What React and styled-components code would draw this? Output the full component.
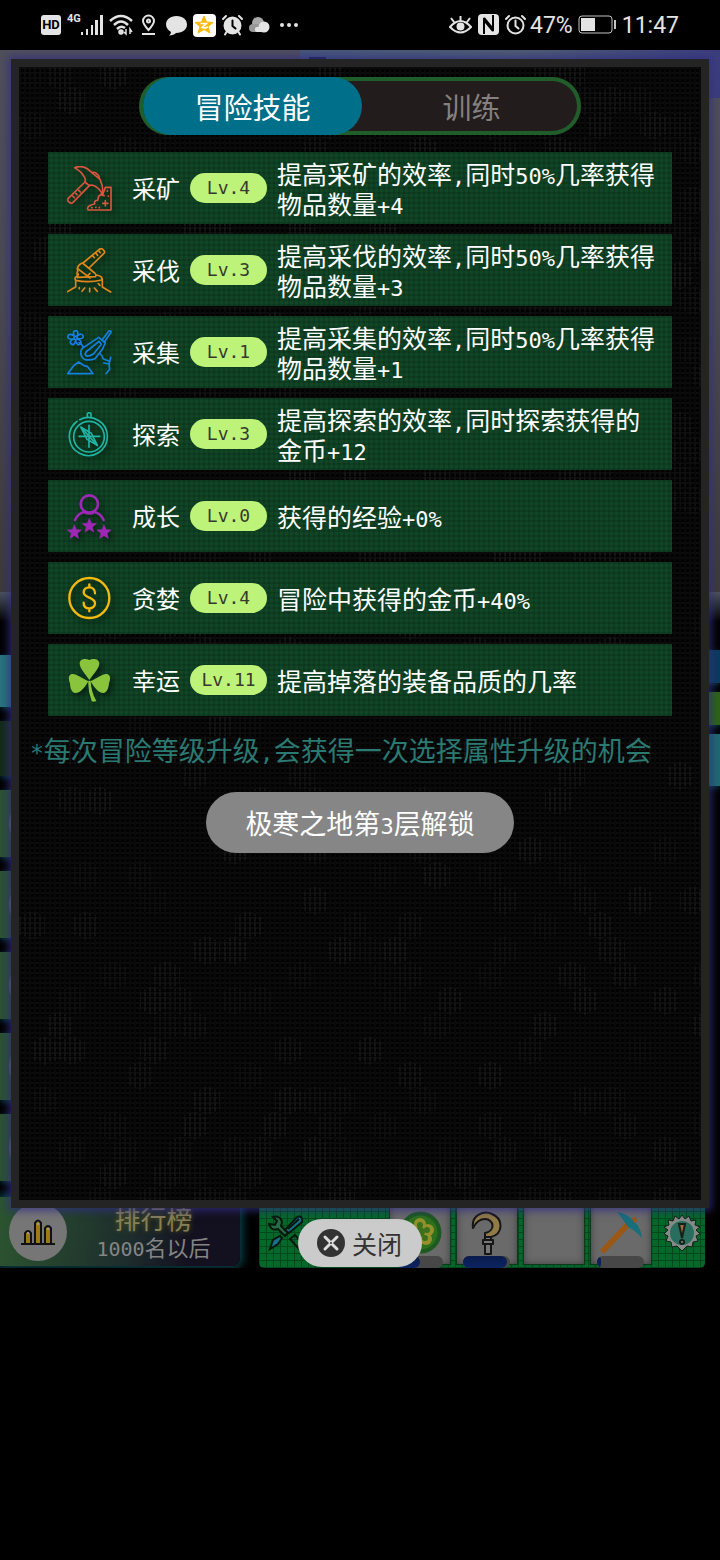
import React, { useState } from "react";
import styled, { createGlobalStyle, css } from "styled-components";

const GlobalStyle = createGlobalStyle`
  * {
    box-sizing: border-box;
  }

  body {
    margin: 0;
    background: #000;
    font-family: "Noto Sans CJK SC", sans-serif;
  }

  button {
    margin: 0;
    padding: 0;
    border: 0;
    background: none;
    font-family: inherit;
    cursor: pointer;
  }

  svg {
    display: block;
    flex: none;
  }
`;

// fine mesh over the skill rows
const mesh = css`
  background-image:
    repeating-linear-gradient(to right, rgba(0, 0, 0, 0.12) 0 2px, transparent 2px 5px),
    repeating-linear-gradient(to bottom, rgba(0, 0, 0, 0.12) 0 2px, transparent 2px 5px);
`;

// Status bar
const StatusBar = styled.header`
  display: flex;
  align-items: center;
  justify-content: space-between;
  height: 50px;
  padding: 0 41px;
  background: #000;
  color: #e4e4e4;
  font-family: Roboto, sans-serif;
  font-size: 23px;
`;

const StatusGroup = styled.div`
  display: flex;
  align-items: center;
  gap: ${(p) => p.$gap};
`;

const HdBadge = styled.span`
  width: 20px;
  height: 20px;
  border-radius: 3px;
  background: #e4e4e4;
  color: #000;
  font-size: 13px;
  font-weight: 700;
  line-height: 20px;
  text-align: center;
`;

const Signal = styled.span`
  display: flex;
  align-items: flex-start;
  font-size: 11px;
  font-weight: 700;
  line-height: 10px;
`;

const QStar = styled.span`
  display: flex;
  align-items: center;
  justify-content: center;
  width: 23px;
  height: 23px;
  border-radius: 4px;
  background: #fff;
`;

// Game screen behind the dialog
const Stage = styled.main`
  display: grid;
  min-height: calc(100vh - 342px);
  overflow: hidden;
`;

const Scene = styled.div`
  grid-area: 1 / 1;
  display: flex;
  flex-direction: column;
`;

const Sky = styled.div`
  height: 542px;
  background: linear-gradient(#50505a, #4a4a50 45%, #3c3a39);
`;

const SkyHeader = styled.div`
  height: 48px;
  margin-left: 300px;
  padding: 7px 9px;
  background: linear-gradient(100deg, #46587a, #4f5f72 50%, #3b3d7c);
`;

const SkyMark = styled.div`
  width: 17px;
  height: 6px;
  border: 3px solid #1b2050;
`;

const SceneBody = styled.div`
  flex: 1;
  display: flex;
  justify-content: space-between;
  background: linear-gradient(#4b545c, #000 30px);
`;

const SideList = styled.div`
  display: flex;
  flex-direction: column;
  gap: ${(p) => p.$gap};
  width: 40%;
  padding-top: ${(p) => p.$top};
`;

const SideItem = styled.div`
  height: ${(p) => p.$height};
  padding: 5px 9px;
  background: ${(p) => p.$color};
  box-shadow: 0 2px 6px #0b3a44;
`;

const SideDot = styled.div`
  width: 57px;
  height: 57px;
  border-radius: 50%;
  background: #5d6a5d;
`;

const Dock = styled.div`
  display: flex;
  align-items: flex-start;
  justify-content: space-between;
  padding-right: 15px;
`;

const RankCard = styled.button`
  display: flex;
  align-items: center;
  width: 240px;
  height: 69px;
  padding-left: 9px;
  border-radius: 0 0 8px 0;
  background: linear-gradient(100deg, #2c5530, #1d2c2c 55%, #13101f 80%);
  box-shadow: 0 0 8px 3px #0a4048;
`;

const RankAvatar = styled.span`
  display: flex;
  align-items: center;
  justify-content: center;
  width: 58px;
  height: 58px;
  border-radius: 50%;
  background: #767676;
`;

const RankText = styled.span`
  flex: 1;
  display: flex;
  flex-direction: column;
  align-items: center;
  color: #858585;
  font-size: 22px;
  line-height: 28px;
`;

const RankTitle = styled.span`
  color: #85805a;
  font-size: 26px;
  text-shadow: 0 0 5px #5c5a16;
`;

const Toolbar = styled.div`
  display: flex;
  width: 446px;
  height: 71px;
  padding: 0 5px 0 9px;
  border-radius: 5px;
  background-color: #04682a;
  background-image:
    repeating-linear-gradient(to right, #03471d 0 1px, transparent 1px 7px),
    repeating-linear-gradient(to bottom, #03471d 0 1px, transparent 1px 7px);
`;

const ToolButton = styled.button`
  display: flex;
  align-items: center;
`;

const Slots = styled.div`
  display: flex;
  gap: 7px;
  margin: 0 13px 0 auto;
`;

const Slot = styled.button`
  position: relative;
  display: flex;
  justify-content: center;
  width: 60px;
  height: 67px;
  padding-top: 14px;
  background: #6a6a6a;
  box-shadow: inset 0 0 7px #3c3c3c, 0 0 1px 1px #0a3a1c;
`;

const Meter = styled.span`
  position: absolute;
  left: 6px;
  bottom: -4px;
  width: 47px;
  height: 12px;
  border-radius: 6px;
  overflow: hidden;
  background: #474747;
`;

const MeterFill = styled.span`
  display: block;
  height: 100%;
  border-radius: 0 6px 6px 0;
  background: linear-gradient(#0a1c4c, #0b2462);
`;

// Dialog
const Overlay = styled.div`
  grid-area: 1 / 1;
  z-index: 1;
  display: flex;
  flex-direction: column;
  align-items: center;
  gap: 11px;
  padding: 9px 11px 1px;
`;

const Panel = styled.section`
  position: relative;
  flex: 1;
  display: flex;
  flex-direction: column;
  align-items: center;
  width: 100%;
  padding-top: 10px;
  border: 8px solid #242424;
  background: #020202;
  box-shadow: 0 0 8px 3px rgba(50, 45, 130, 0.75);
  color: #fff;
`;

const Backdrop = styled.svg`
  position: absolute;
  inset: 0;
  width: 100%;
  height: 100%;
`;

const Tabs = styled.div`
  position: relative;
  display: grid;
  grid-template-columns: 1fr 1fr;
  width: 442px;
  max-width: 100%;
  height: 58px;
  padding-left: 4px;
  border-radius: 29px;
  background: #231c1c;
  box-shadow: inset 0 0 0 4px #1f5e2b;
`;

const Tab = styled.button`
  border-radius: 29px;
  background: ${(p) => (p.$active ? "#00708a" : "transparent")};
  color: ${(p) => (p.$active ? "#fff" : "#858080")};
  font-size: 29px;
  line-height: 54px;
`;

const SkillList = styled.ul`
  position: relative;
  align-self: stretch;
  display: flex;
  flex-direction: column;
  gap: 10px;
  margin: 17px 29px 0;
  padding: 0;
  list-style: none;
`;

const SkillRow = styled.li`
  display: flex;
  align-items: center;
  gap: 10px;
  min-height: 72px;
  padding: 0 10px 0 19px;
  background-color: #104526;
  ${mesh}

  svg {
    margin-right: 10px;
    filter: drop-shadow(3px 3px 3px rgba(0, 0, 0, 0.5));
  }
`;

const SkillName = styled.span`
  flex: none;
  font-size: 24px;
  line-height: 30px;
`;

const Level = styled.span`
  flex: none;
  width: 77px;
  height: 30px;
  border-radius: 15px;
  background: #bdf378;
  color: #363a2c;
  font-family: "DejaVu Sans Mono", monospace;
  font-size: 18px;
  line-height: 30px;
  text-align: center;
`;

const SkillText = styled.span`
  flex: 1;
  font-size: 25px;
  line-height: 30px;
`;

// short line height, so that the runs never stretch the line they sit in
const Latin = styled.span`
  font-family: "DejaVu Sans Mono", monospace;
  font-size: ${(p) => p.$size};
  line-height: 16px;
`;

const Note = styled.p`
  position: relative;
  align-self: stretch;
  margin: 16px 11px 0;
  color: #2b7a72;
  font-size: 27px;
  line-height: 36px;
`;

const UnlockButton = styled.button`
  position: relative;
  height: 61px;
  margin-top: 24px;
  padding: 0 39px;
  border-radius: 31px;
  background: #868686;
  color: #fff;
  font-size: 27px;
  line-height: 56px;
`;

const CloseButton = styled.button`
  display: flex;
  align-items: center;
  gap: 7px;
  height: 48px;
  padding: 0 20px 0 19px;
  border-radius: 24px;
  background: #cbcbcb;
  color: #333;
  font-size: 25px;
  line-height: 44px;
`;

// Latin runs use a slightly smaller monospace face than the Chinese text
const Mixed = ({ text, size = "22px" }) =>
  text
    .split(/([\x20-\x7e]+)/)
    .filter(Boolean)
    .map((part, i) =>
      /^[\x20-\x7e]/.test(part) ? (
        <Latin key={i} $size={size}>
          {part}
        </Latin>
      ) : (
        part
      )
    );

const SkillSvg = ({ color, children, width = 5 }) => (
  <svg width="45" height="45" viewBox="0 0 135 135" fill="none" stroke={color} strokeWidth={width} strokeLinecap="round" strokeLinejoin="round">
    {children}
  </svg>
);

const MineIcon = () => (
  <SkillSvg color="#d9553f">
    <path d="M23 5C36 0 50 1 62 9L99 40C106 55 109 70 107 86C99 70 87 60 75 57L66 58L54 48L55 39C49 24 38 13 23 5Z" />
    <path d="M54 48L3 98Q0 102 4 106L10 111Q14 113 18 109L67 59" />
    <path d="M76 21C80 15 96 24 97 36M17 90l5 5M26 82l4 4M35 73l5 5" />
    <path d="M115 64H132V132H63C60 126 63 119 71 118C75 113 82 116 83 113C81 107 86 102 92 103L95 91L103 84L106 88L115 64Z" />
    <path d="M115 104v16M107 112h16M121 74v2M111 88v1M124 90v1M97 124v1M74 125h1M86 124h1" />
  </SkillSvg>
);

const ChopIcon = () => (
  <SkillSvg color="#e0871b">
    <path d="M48 45L97 4Q101 0 106 3L111 8Q115 13 110 17L66 60" />
    <path d="M86 15l6 7M95 8l5 6M77 23l5 6" />
    <path d="M44 46Q34 50 31 61Q34 67 30 76L32 88L85 86Q90 83 83 75L50 48Q47 44 44 46Z" />
    <path d="M32 62L69 90M59 86L69 76M31 88L34 78" />
    <path d="M29 86Q21 88 26 97Q65 105 104 96Q109 85 89 81" />
    <path d="M26 97V117Q16 122 2 131M106 93V117Q116 123 131 132" />
    <path d="M53 120L45 130M68 121V131M82 120L91 130M94 107l5 5M37 119v3" />
  </SkillSvg>
);

const GatherIcon = () => (
  <SkillSvg color="#1680e0">
    <circle cx="26" cy="24" r="5" />
    <path d="M22 18C16 6 22 2 26 2C31 2 36 7 30 18C40 10 46 12 48 17C50 23 46 28 32 26C43 32 44 38 39 42C34 46 28 44 26 31C24 44 18 46 13 42C8 38 8 32 20 27C6 29 1 25 3 18C5 11 14 12 22 18Z" />
    <path d="M36 38Q45 42 50 52" />
    <path d="M105 30L124 5Q128 0 131 3Q134 7 129 11L112 36" />
    <path d="M95 22L115 39L106 58L84 86Q68 92 52 88Q38 78 42 62Q44 53 58 47L95 22Z" />
    <path d="M96 34L103 43L80 71Q65 80 58 78Q52 73 57 66L96 34Z" />
    <path d="M2 131L20 107L35 96L51 107L62 110L78 131Z" />
    <path d="M98 70Q107 76 108 86L127 94M131 82L126 103L128 118L117 131M127 102L110 99" />
  </SkillSvg>
);

const ExploreIcon = () => (
  <SkillSvg color="#1fb5a4">
    <path d="M30 28A57 57 0 1 0 38 23" />
    <circle cx="66" cy="74" r="46" />
    <path d="M61 14V5Q67 -1 72 5V14M20 38L23 34" />
    <path d="M66 40V106M36 73H98" />
    <path d="M42 46L73 64L91 100L60 82Z" />
    <path d="M42 46L91 100" />
  </SkillSvg>
);

const STAR = "M0 -21L6 -7L21 -6L9 4L13 19L0 11L-13 19L-9 4L-21 -6L-6 -7Z";

const GrowIcon = () => (
  <SkillSvg color="#9e27b5" width={8}>
    <circle cx="67" cy="30" r="26" />
    <path d="M24 78Q34 57 52 54Q67 62 82 54Q100 57 110 78" />
    <g fill="#9e27b5" strokeWidth="2">
      <path d={STAR} transform="translate(67 95)" />
      <path d={STAR} transform="translate(22 114)" />
      <path d={STAR} transform="translate(111 114)" />
    </g>
  </SkillSvg>
);

const GreedIcon = () => (
  <SkillSvg color="#f2b90f" width={7}>
    <circle cx="67" cy="66" r="60" />
    <path d="M84 52C84 40 76 34 67 34C57 34 50 40 50 49C50 68 84 62 84 82C84 92 76 97 67 97C57 97 50 91 50 80M67 25V34M67 97V106" />
  </SkillSvg>
);

const LuckIcon = () => (
  <SkillSvg color="none">
    <g fill="#89c43c">
      <path d="M67 66C55 48 38 32 38 16C38 3 55 0 67 6C79 0 96 3 97 16C97 32 79 48 67 66Z" />
      <path d="M64 69C46 63 25 44 12 49C3 53 5 66 9 76C9 90 14 105 25 105C41 105 56 86 64 69Z" />
      <path d="M71 69C89 63 110 44 122 49C132 53 130 66 126 76C125 90 120 105 109 105C94 105 79 86 71 69Z" />
      <path d="M64 68H71Q72 101 88 129Q78 134 74 129Q62 98 64 68Z" />
    </g>
  </SkillSvg>
);

const AlarmIcon = ({ solid }) => (
  <svg width="21" height="22" viewBox="0 0 21 22" fill="none" stroke="#e4e4e4" strokeWidth="2" strokeLinecap="round">
    <circle cx="10.5" cy="11.5" r="8" fill={solid ? "#e4e4e4" : "none"} />
    <path d="M1 5L4 2M20 5L17 2" />
    {solid && <path d="M4.500 18L3 20.500M16.500 18L18 20.500" />}
    <path d="M10.500 6.500V12L13.500 14.500" stroke={solid ? "#000" : "#e4e4e4"} />
  </svg>
);

const skills = [
  { name: "采矿", level: 4, icon: MineIcon, text: "提高采矿的效率,同时50%几率获得物品数量+4" },
  { name: "采伐", level: 3, icon: ChopIcon, text: "提高采伐的效率,同时50%几率获得物品数量+3" },
  { name: "采集", level: 1, icon: GatherIcon, text: "提高采集的效率,同时50%几率获得物品数量+1" },
  { name: "探索", level: 3, icon: ExploreIcon, text: "提高探索的效率,同时探索获得的金币+12" },
  { name: "成长", level: 0, icon: GrowIcon, text: "获得的经验+0%" },
  { name: "贪婪", level: 4, icon: GreedIcon, text: "冒险中获得的金币+40%" },
  { name: "幸运", level: 11, icon: LuckIcon, text: "提高掉落的装备品质的几率" },
];

// scattered hexagons, faintly lit through the mesh
const hexes = [];
for (let row = 0; row < 46; row++) {
  for (let col = 0; col < 26; col++) {
    const seed = Math.abs(Math.sin(row * 12.9898 + col * 78.233) * 43758.5453) % 1;
    if (seed < 0.27) {
      hexes.push({ x: col * 27 + (row % 2) * 13, y: row * 25, o: 0.3 + seed * 2 });
    }
  }
}

const PanelBackdrop = () => (
  <Backdrop aria-hidden="true">
    <defs>
      <pattern id="mesh" width="5" height="5" patternUnits="userSpaceOnUse">
        <path d="M0 0H5V2H0Z" fill="#0c0c0c" />
        <path d="M0 0H2V5H0Z" fill="#090909" />
      </pattern>
      <pattern id="lines" width="5" height="5" patternUnits="userSpaceOnUse">
        <path d="M0 0H2V4H0Z" fill="#171717" />
      </pattern>
    </defs>
    <rect width="100%" height="100%" fill="url(#mesh)" />
    {hexes.map((h) => (
      <path key={`${h.x}-${h.y}`} d={`M${h.x} ${h.y}l13 -6l13 6v17l-13 6l-13 -6z`} fill="url(#lines)" opacity={h.o} />
    ))}
  </Backdrop>
);

const TopStatus = () => (
  <StatusBar>
    <StatusGroup $gap="6px">
      <HdBadge>HD</HdBadge>
      <Signal>
        4G
        <svg width="22" height="22" viewBox="0 0 22 22" fill="#e4e4e4">
          <path d="M0 18h2v3h-2zM5 15h2v6h-2zM10 11h2v10h-2zM14 6h3v15h-3zM19 1h3v20h-3z" />
        </svg>
      </Signal>
      <svg width="25" height="22" viewBox="0 0 25 22" fill="none" stroke="#e4e4e4" strokeWidth="2.500">
        <path d="M1 7Q12 -3 23 7M5 11Q12 4 19 11M8 15Q12 11 16 14" />
        <circle cx="12" cy="18" r="1.500" />
        <path d="M17 15v5l-2 -2M21 20v-5l2 3" strokeWidth="1.500" />
      </svg>
      <svg width="20" height="22" viewBox="3 0 20 22" fill="none" stroke="#e4e4e4" strokeWidth="2">
        <path d="M11.500 16C7 11 6 9 6 7A5.500 5.500 0 0 1 17 7C17 9 16 11 11.500 16ZM5 20H18" />
        <circle cx="11.500" cy="7" r="1.500" />
      </svg>
      <svg width="21" height="21" viewBox="0 0 21 21" fill="#e4e4e4">
        <path d="M10.500 1C4 1 0 5 0 9.500C0 13 2 15 5 17Q5 19 3 20.500Q8 20 10 18C17 18 21 14 21 9.500C21 5 17 1 10.500 1Z" />
      </svg>
      <QStar>
        <svg width="20" height="20" viewBox="0 0 20 20">
          <path d="M10 1L12.500 7L19 7.500L14 11.500L16 18L10 14.500L4 18L6 11.500L1 7.500L7.500 7Z" fill="#f9b90e" stroke="#f9b90e" strokeLinejoin="round" />
          <path d="M6.500 8.500H12.500L8 12.500Q11 13.500 14 12" fill="none" stroke="#fff" strokeWidth="1.500" />
        </svg>
      </QStar>
      <AlarmIcon solid />
      <svg width="22" height="22" viewBox="0 0 22 22">
        <circle cx="9" cy="9" r="6" fill="#aaa" />
        <rect y="10" width="14" height="8" rx="4" fill="#999" />
        <circle cx="15" cy="13" r="5.500" fill="#e4e4e4" />
        <rect x="6" y="13" width="12" height="5" rx="2" fill="#e4e4e4" />
      </svg>
      <svg width="22" height="22" viewBox="0 0 22 22" fill="#e4e4e4">
        <circle cx="5" cy="11" r="2" />
        <circle cx="12" cy="11" r="2" />
        <circle cx="19" cy="11" r="2" />
      </svg>
    </StatusGroup>
    <StatusGroup $gap="5px">
      <svg width="23" height="22" viewBox="0 0 23 22" fill="none" stroke="#e4e4e4" strokeWidth="2">
        <path d="M1 13Q11.500 1 22 13Q11.500 24 1 13ZM11.500 7V2M5 8L2 4M18 8L21 4" />
        <circle cx="11.500" cy="12.500" r="3" fill="#e4e4e4" />
      </svg>
      <svg width="23" height="22" viewBox="0 0 23 22">
        <rect x="1" width="21" height="21" rx="4" fill="#e4e4e4" />
        <path d="M7 20V6L16 17M16 1V15L7 4" fill="none" stroke="#000" strokeWidth="2" />
      </svg>
      <StatusGroup $gap="4px">
        <AlarmIcon />
        <span>47%</span>
      </StatusGroup>
      <svg width="39" height="20" viewBox="0 0 39 20">
        <rect x="1" y="1" width="33" height="17" rx="3" fill="none" stroke="#c4c4c4" />
        <rect x="3" y="3" width="14" height="13" fill="#e4e4e4" />
        <rect x="36" y="5" width="2" height="9" fill="#c4c4c4" />
      </svg>
      <span>11:47</span>
    </StatusGroup>
  </StatusBar>
);

const BottomDock = () => (
  <Dock>
    <RankCard>
      <RankAvatar>
        <svg width="34" height="26" viewBox="0 0 34 26" fill="#9a7c13" stroke="#111" strokeWidth="2">
          <path d="M4 25V14Q7 10 10 14V25M14 25V4Q17 -1 20 4V25M24 25V9Q27 5 30 9V25M0 25H34" />
          <path d="M6 14h2M16 5h2M26 10h2" stroke="#999" />
        </svg>
      </RankAvatar>
      <RankText>
        <RankTitle>排行榜</RankTitle>
        <span>
          <Mixed text="1000名以后" size="20px" />
        </span>
      </RankText>
    </RankCard>
    <Toolbar>
      <ToolButton aria-label="工具">
        <svg width="36" height="36" viewBox="0 0 36 36" fill="none" stroke="#06180c" strokeWidth="2">
          <path d="M5 2Q12 0 14 7L13 11L20 18L17 21L10 14Q3 16 1 9L7 10L9 6Z" fill="#286b45" />
          <path d="M17 15L29 2Q35 0 34 7L21 18Z" fill="#17708a" />
          <path d="M20 14L31 4M14 23L10 29L2 34L5 25L12 21Z" fill="#17708a" />
          <path d="M22 24L27 20L35 29L31 34Z" />
        </svg>
      </ToolButton>
      <Slots>
        <Slot aria-label="幸运币">
          <svg width="43" height="43" viewBox="0 0 43 43">
            <circle cx="21.500" cy="21.500" r="21" fill="#1d5a20" />
            <circle cx="21.500" cy="21.500" r="17" fill="#2f701d" />
            <g fill="#94912b">
              <circle cx="21" cy="13" r="6" />
              <circle cx="13" cy="19" r="6" />
              <circle cx="29" cy="19" r="6" />
              <circle cx="16" cy="28" r="6" />
              <circle cx="27" cy="28" r="6" />
            </g>
            <g fill="#3c701c">
              <circle cx="21" cy="14" r="3" />
              <circle cx="14" cy="19" r="3" />
              <circle cx="28" cy="19" r="3" />
              <circle cx="17" cy="27" r="3" />
              <circle cx="26" cy="27" r="3" />
              <circle cx="21" cy="21" r="5" />
            </g>
          </svg>
          <Meter>
            <MeterFill style={{ width: "50%" }} />
          </Meter>
        </Slot>
        <Slot aria-label="镰刀">
          <svg width="32" height="44" viewBox="0 0 32 44" stroke="#161616" strokeWidth="2" strokeLinejoin="round">
            <path d="M2 17C0 4 13 -1 21 3C33 8 32 23 20 26H14V22C25 20 23 8 14 8C8 8 5 11 2 17Z" fill="#907b45" />
            <path d="M14 26H20V29H14ZM12 29H22V33H12ZM14 33H20V43H14Z" fill="#777" />
          </svg>
          <Meter>
            <MeterFill style={{ width: "94%" }} />
          </Meter>
        </Slot>
        <Slot aria-label="空栏位" />
        <Slot aria-label="矿镐">
          <svg width="44" height="44" viewBox="0 0 44 44">
            <path d="M1 39L31 7L35 11L5 43Z" fill="#9b5714" />
            <path d="M18 1Q29 3 35 10Q42 17 43 27Q36 19 29 16Q24 8 18 1Z" fill="#176f7c" />
            <path d="M33 7L37 6L38 10L35 12Z" fill="#9b5714" />
          </svg>
          <Meter>
            <MeterFill style={{ width: "9%" }} />
          </Meter>
        </Slot>
      </Slots>
      <ToolButton aria-label="提示">
        <svg width="36" height="36" viewBox="0 0 36 36" fill="#858b87" stroke="#142018" strokeWidth="1">
          <path d="M18 0L21 4L25 1L27 6L32 5L31 10L36 12L32 15L36 19L32 21L34 26L29 27L28 32L23 31L18 36L13 31L8 32L7 27L2 26L4 21L0 19L4 15L0 12L5 10L4 5L9 6L11 1L15 4Z" />
          <circle cx="18" cy="18" r="12" fill="#286d5d" stroke="none" />
          <path d="M15 9H21L18 23Z" fill="#a36c3d" strokeWidth="2" />
          <circle cx="18" cy="27" r="2" strokeWidth="2" />
        </svg>
      </ToolButton>
    </Toolbar>
  </Dock>
);

const App = () => {
  const [tab, setTab] = useState("skill");

  return (
    <>
      <GlobalStyle />
      <TopStatus />
      <Stage>
        <Scene>
          <Sky>
            <SkyHeader>
              <SkyMark />
            </SkyHeader>
          </Sky>
          <SceneBody>
            <SideList $gap="14px" $top="63px">
              <SideItem $height="52px" $color="#28757c" />
              <SideItem $height="55px" $color="#142a17" />
              {[1, 2, 3, 4, 5].map((n) => (
                <SideItem key={n} $height="67px" $color="#2b5230">
                  <SideDot />
                </SideItem>
              ))}
            </SideList>
            <SideList $gap="9px" $top="58px">
              <SideItem $height="33px" $color="#0a3a5c" />
              <SideItem $height="33px" $color="#2c6414" />
              <SideItem $height="52px" $color="#1f6a70" />
            </SideList>
          </SceneBody>
          <BottomDock />
        </Scene>

        <Overlay>
          <Panel>
            <PanelBackdrop />
            <Tabs role="tablist">
              <Tab role="tab" aria-selected={tab === "skill"} $active={tab === "skill"} onClick={() => setTab("skill")}>
                冒险技能
              </Tab>
              <Tab role="tab" aria-selected={tab === "train"} $active={tab === "train"} onClick={() => setTab("train")}>
                训练
              </Tab>
            </Tabs>
            <SkillList>
              {skills.map(({ name, level, icon: Icon, text }) => (
                <SkillRow key={name}>
                  <Icon />
                  <SkillName>{name}</SkillName>
                  <Level>Lv.{level}</Level>
                  <SkillText>
                    <Mixed text={text} />
                  </SkillText>
                </SkillRow>
              ))}
            </SkillList>
            <Note>
              <Mixed text="*每次冒险等级升级,会获得一次选择属性升级的机会" size="23px" />
            </Note>
            <UnlockButton>
              <Mixed text="极寒之地第3层解锁" />
            </UnlockButton>
          </Panel>
          <CloseButton>
            <svg width="28" height="28" viewBox="0 0 28 28">
              <circle cx="14" cy="14" r="14" fill="#333" />
              <path d="M8 8L20 20M20 8L8 20" stroke="#ddd" strokeWidth="3" strokeLinecap="round" />
              <circle cx="14" cy="14" r="1" fill="#333" />
            </svg>
            关闭
          </CloseButton>
        </Overlay>
      </Stage>
    </>
  );
};

export default App;
